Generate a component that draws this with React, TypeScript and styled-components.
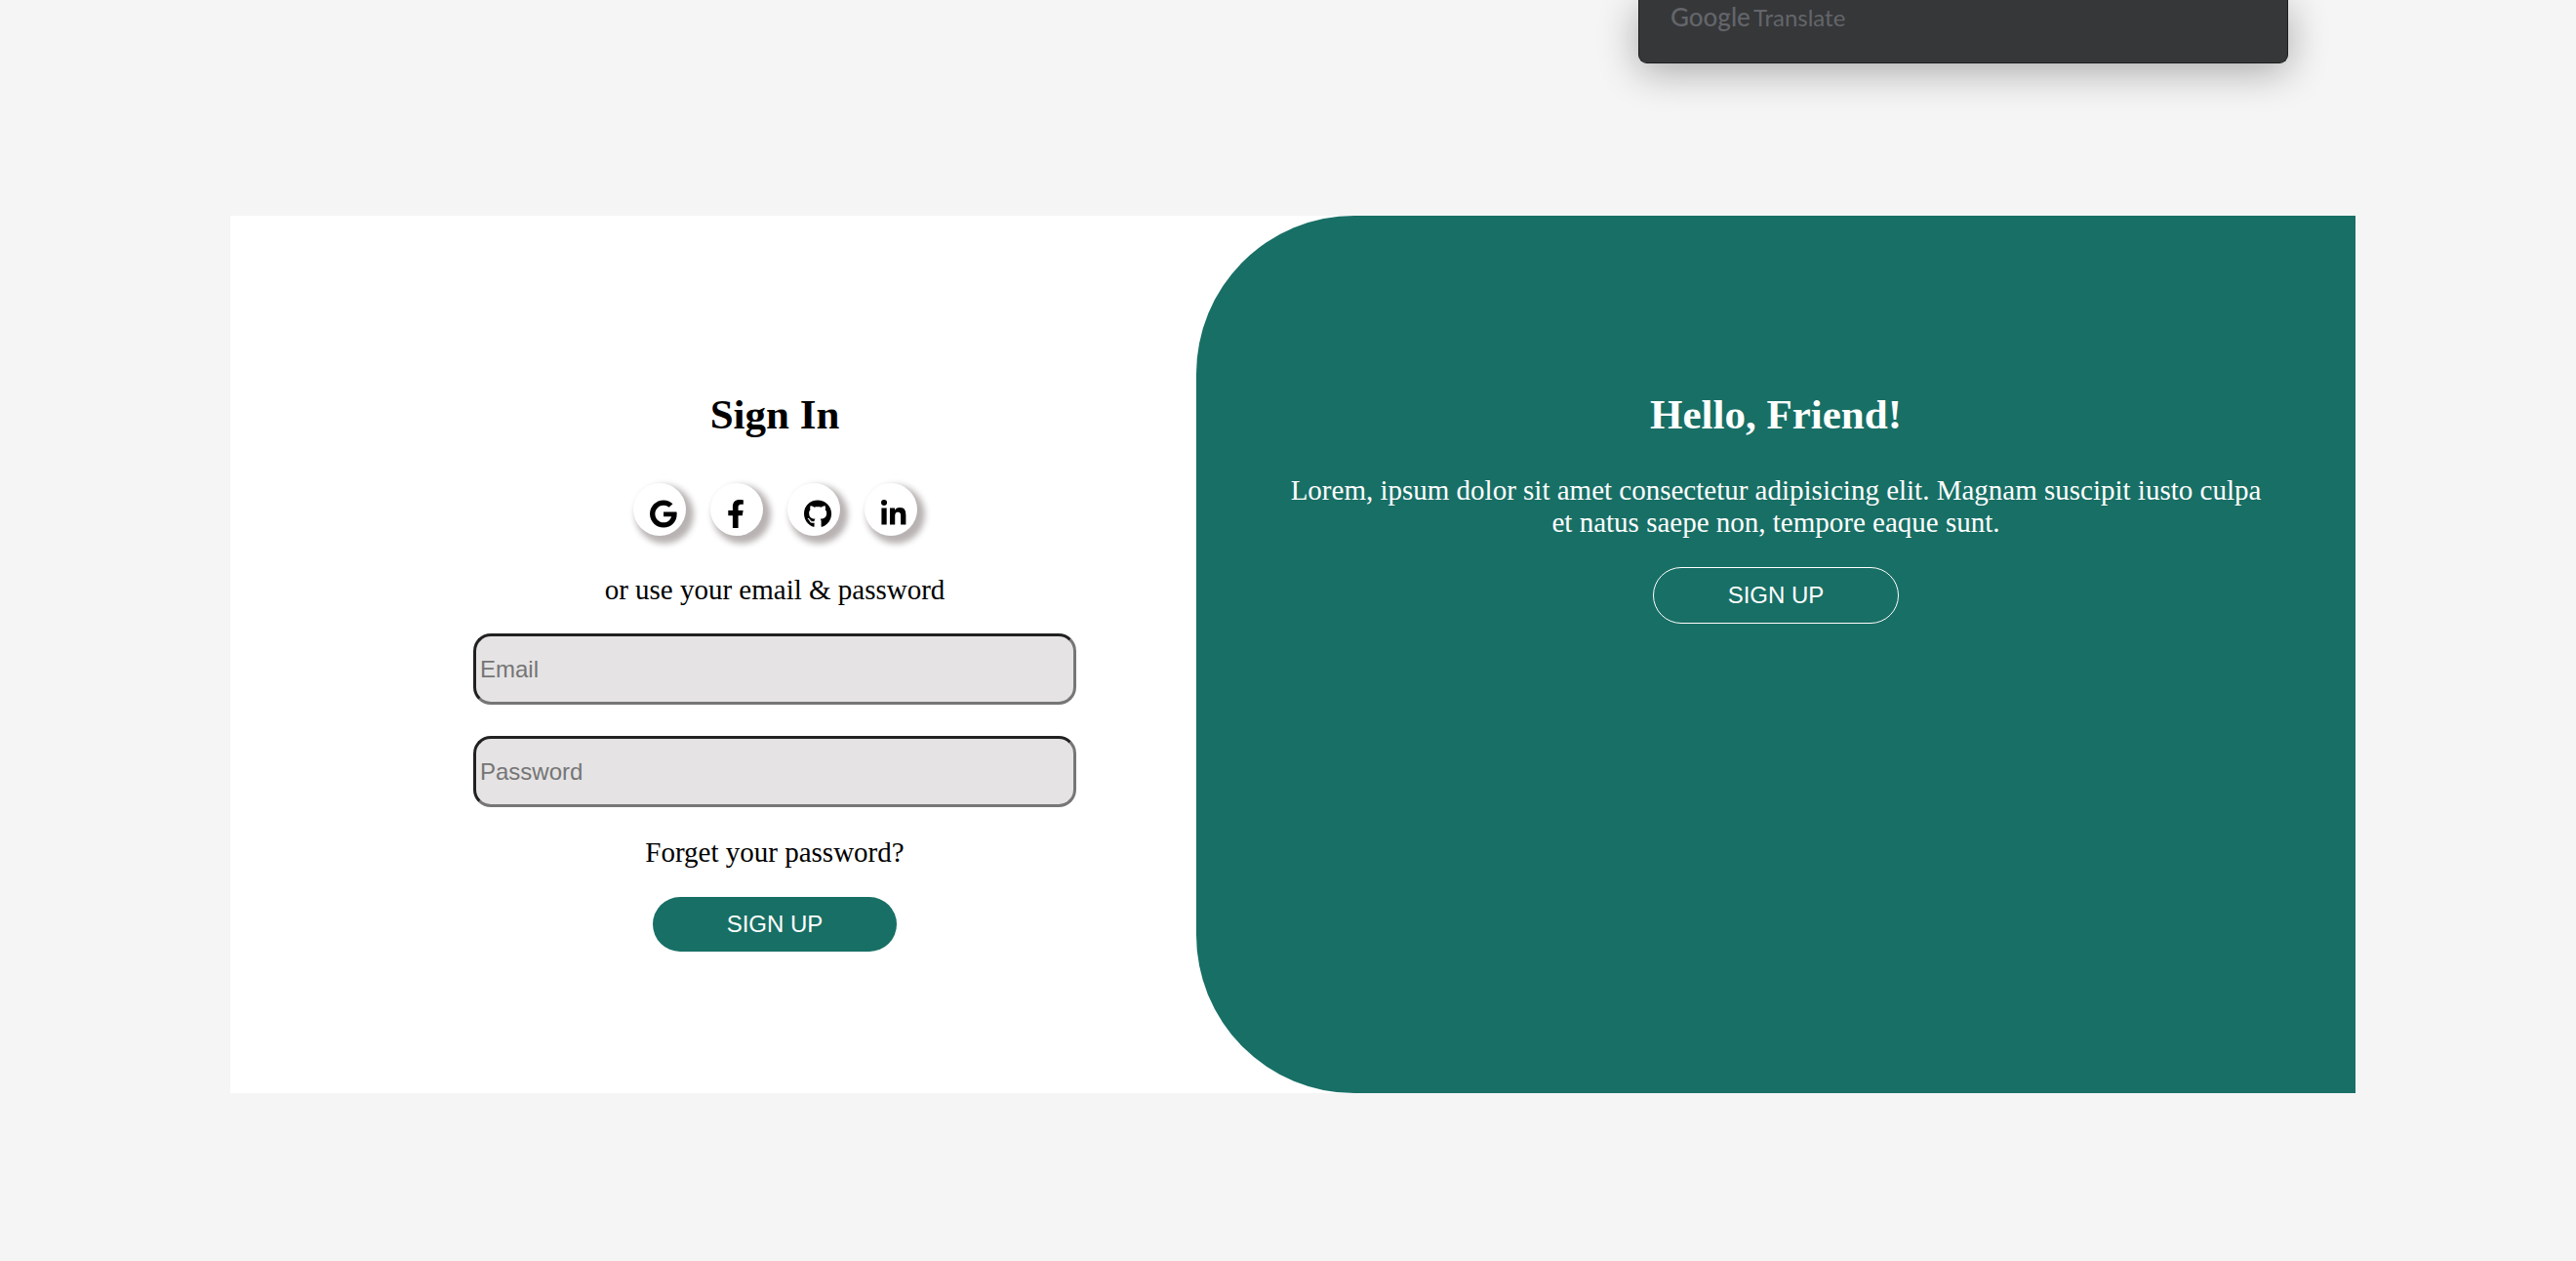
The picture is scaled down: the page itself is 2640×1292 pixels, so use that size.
import React from "react";
import styled, { createGlobalStyle } from "styled-components";
import { FaGoogle, FaFacebookF, FaGithub, FaLinkedinIn } from "react-icons/fa";

const GREEN = "#186f65";
const SERIF = '"Liberation Serif", "Times New Roman", serif';
const SANS = '"Liberation Sans", Arial, sans-serif';

const GlobalStyle = createGlobalStyle`
  *, *::before, *::after { box-sizing: border-box; }
  body {
    margin: 0;
    background: #f5f5f5;
    color: #000;
    font-family: ${SERIF};
    font-size: 29px;
    line-height: 33px;
  }
`;

const Page = styled.main`
  position: relative;
  min-height: 100vh;
  padding: 221px 226px 171px 236px;
`;

const TranslatePopup = styled.aside`
  position: absolute;
  top: 0;
  right: 295px;
  width: 666px;
  height: 65px;
  padding: 1px 32px;
  border: 1px solid #1d1e1f;
  border-top: 0;
  border-radius: 0 0 9px 9px;
  background: #363739;
  box-shadow: 0 8px 40px rgba(0, 0, 0, 0.32);
  color: #63656a;
  font-family: Lato, sans-serif;
  font-size: 24px;
  line-height: 32px;
`;

const Brand = styled.span`
  margin-right: 3px;
  font-size: 26px;
  font-weight: 500;
`;

const Card = styled.div`
  display: grid;
  grid-template-columns: 5fr 6fr;
  background: #fff;
`;

const Panel = styled.section`
  display: flex;
  flex-direction: column;
  align-items: center;
  padding: 180px 96px 145px;
  text-align: center;
`;

const SignInPanel = styled(Panel)`
  padding-left: 249px;
  padding-right: 123px;
`;

const HelloPanel = styled(Panel)`
  border-radius: 162px 0 0 162px;
  background: ${GREEN};
  color: #fff;
`;

const Title = styled.h1`
  margin: 0;
  font-size: 43px;
  line-height: 48px;
`;

const Socials = styled.nav`
  display: flex;
  gap: 25px;
  margin: 46px 0 39px;
`;

const SocialLink = styled.a`
  display: flex;
  width: 54px;
  height: 54px;
  padding: 17px 0 0 17px;
  border-radius: 50%;
  background: #fff;
  box-shadow: 5px 5px 6px 3px #b8b2b2;
  color: #000;
  font-size: 29px;

  svg {
    flex: none;
  }
`;

const Text = styled.p`
  margin: 0;
`;

const Intro = styled(Text)`
  margin: 37px 0 29px;
`;

const Form = styled.form`
  display: flex;
  flex-direction: column;
  align-items: center;
  width: 100%;
`;

const Fields = styled.div`
  display: flex;
  flex-direction: column;
  gap: 32px;
  width: 100%;
  margin: 28px 0 30px;
`;

const Field = styled.input`
  width: 100%;
  height: 73px;
  padding: 2px 4px;
  border: 3px solid;
  border-color: #212121 #767676 #767676 #212121;
  border-radius: 18px;
  background: #e5e3e4;
  font-family: ${SANS};
  font-size: 24px;

  &::placeholder {
    color: #757575;
  }
`;

const ForgotLink = styled.a`
  margin-bottom: 29px;
  color: inherit;
  text-decoration: none;
`;

const PillButton = styled.button<{ $outlined?: boolean }>`
  padding: 14px 76px;
  border: ${(p) => (p.$outlined ? "1px solid #fff" : "0")};
  border-radius: 30px;
  background: ${GREEN};
  color: #fff;
  font-family: ${SANS};
  font-size: 24px;
  line-height: 28px;
`;

const socials = [
  { name: "Google", Icon: FaGoogle },
  { name: "Facebook", Icon: FaFacebookF },
  { name: "GitHub", Icon: FaGithub },
  { name: "LinkedIn", Icon: FaLinkedinIn },
];

export default function App() {
  return (
    <>
      <GlobalStyle />
      <Page>
        <TranslatePopup>
          <Brand>Google</Brand>Translate
        </TranslatePopup>
        <Card>
          <SignInPanel>
            <Title>Sign In</Title>
            <Socials>
              {socials.map(({ name, Icon }) => (
                <SocialLink key={name} href="#" aria-label={name}>
                  <Icon preserveAspectRatio="xMinYMid meet" />
                </SocialLink>
              ))}
            </Socials>
            <Text>or use your email &amp; password</Text>
            <Form onSubmit={(e) => e.preventDefault()}>
              <Fields>
                <Field type="email" placeholder="Email" aria-label="Email" />
                <Field type="password" placeholder="Password" aria-label="Password" />
              </Fields>
              <ForgotLink href="#">Forget your password?</ForgotLink>
              <PillButton type="submit">SIGN UP</PillButton>
            </Form>
          </SignInPanel>
          <HelloPanel>
            <Title as="h2">Hello, Friend!</Title>
            <Intro>
              Lorem, ipsum dolor sit amet consectetur adipisicing elit. Magnam suscipit iusto culpa et
              natus saepe non, tempore eaque sunt.
            </Intro>
            <PillButton type="button" $outlined>
              SIGN UP
            </PillButton>
          </HelloPanel>
        </Card>
      </Page>
    </>
  );
}
